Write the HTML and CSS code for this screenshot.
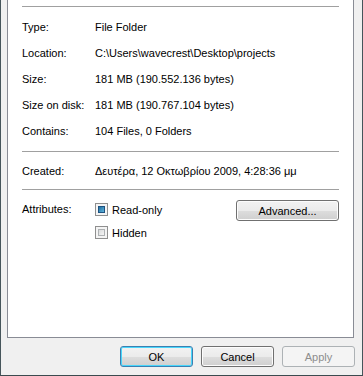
FILE: index.html
```
<!DOCTYPE html>
<html lang="en">
<head>
    <meta charset="UTF-8">
    <meta name="viewport" content="width=device-width, initial-scale=1.0">
    <title>projects Properties</title>
    <link rel="stylesheet" href="styles.css">
</head>
<body>
    <div class="window">
        <div class="panel">
            <div class="sep first-sep"></div>

            <div class="row"><span class="label">Type:</span><span class="value">File Folder</span></div>
            <div class="row"><span class="label">Location:</span><span class="value">C:\Users\wavecrest\Desktop\projects</span></div>
            <div class="row"><span class="label">Size:</span><span class="value">181 MB (190.552.136 bytes)</span></div>
            <div class="row"><span class="label">Size on disk:</span><span class="value">181 MB (190.767.104 bytes)</span></div>
            <div class="row"><span class="label">Contains:</span><span class="value">104 Files, 0 Folders</span></div>

            <div class="sep sep-mid"></div>

            <div class="row created"><span class="label">Created:</span><span class="value">Δευτέρα, 12 Οκτωβρίου 2009, 4:28:36 μμ</span></div>

            <div class="sep sep-low"></div>

            <div class="attrs">
                <span class="label attr-label">Attributes:</span>
                <div class="checks">
                    <label class="check"><span class="box box-mixed"><span class="inner"></span></span>Read-only</label>
                    <label class="check"><span class="box"><span class="inner"></span></span>Hidden</label>
                </div>
                <button class="btn btn-advanced">Advanced...</button>
            </div>
        </div>

        <div class="footer">
            <button class="btn btn-default">OK</button>
            <button class="btn">Cancel</button>
            <button class="btn btn-disabled">Apply</button>
        </div>
    </div>
</body>
</html>
```

FILE: styles.css
```
* {
    box-sizing: border-box;
}

body {
    margin: 0;
    background: #f0f0f0;
    font-family: "Liberation Sans", Arial, sans-serif;
    font-size: 11px;
    color: #000;
}

.window {
    width: 363px;
    height: 376px;
    border-left: 1px solid #46555b;
    border-right: 1px solid #46555b;
    border-bottom: 1px solid #3b4b4f;
    background: #f0f0f0;
}

.panel {
    margin-left: 6px;
    width: 347px;
    height: 338px;
    background: #fff;
    border: 1px solid #898c95;
    border-top: none;
    padding: 6px 0 0 14px;
}

.sep {
    width: 317px;
    height: 1px;
    background: #a0a0a0;
}

.first-sep {
    margin-bottom: 7px;
}

.sep-mid {
    margin-top: 7px;
    margin-bottom: 6px;
}

.sep-low {
    margin-top: 5px;
}

.row {
    display: flex;
    height: 26px;
    line-height: 26px;
}

.label {
    width: 73px;
    flex-shrink: 0;
}

.value {
    white-space: nowrap;
}

.attrs {
    display: flex;
    margin-top: 8px;
}

.attr-label {
    line-height: 23px;
}

.checks {
    display: flex;
    flex-direction: column;
    width: 141px;
}

.check {
    display: flex;
    align-items: center;
    height: 23px;
}

.box {
    width: 13px;
    height: 13px;
    border: 1px solid #8f8f8f;
    background: #f4f4f4;
    padding: 2px;
    margin-right: 4px;
}

.box .inner {
    display: block;
    width: 7px;
    height: 7px;
    border: 1px solid #aeb1b3;
    background: linear-gradient(135deg, #d9dadb, #f5f5f5);
}

.box-mixed .inner {
    border-color: #1d5281;
    background: linear-gradient(135deg, #1f6ea0, #5fb4dc);
}

.btn {
    width: 73px;
    height: 21px;
    padding: 0;
    font-family: "Liberation Sans", Arial, sans-serif;
    font-size: 11px;
    color: #000;
    border: 1px solid #707070;
    border-radius: 3px;
    background: linear-gradient(#f2f2f2 0%, #ebebeb 50%, #dddddd 51%, #cfcfcf 100%);
    box-shadow: inset 0 0 0 1px #fcfcfc;
}

.btn-advanced {
    width: 103px;
    margin-top: 2px;
}

.footer {
    display: flex;
    justify-content: flex-end;
    gap: 8px;
    padding-right: 7px;
    margin-top: 8px;
}

.btn-default {
    border-color: #3c7fb1;
    box-shadow: inset 0 0 0 1px #48d6fb;
}

.btn-disabled {
    color: #8d8d8d;
    border-color: #adb2b5;
    background: #f4f4f4;
    box-shadow: none;
}
```
